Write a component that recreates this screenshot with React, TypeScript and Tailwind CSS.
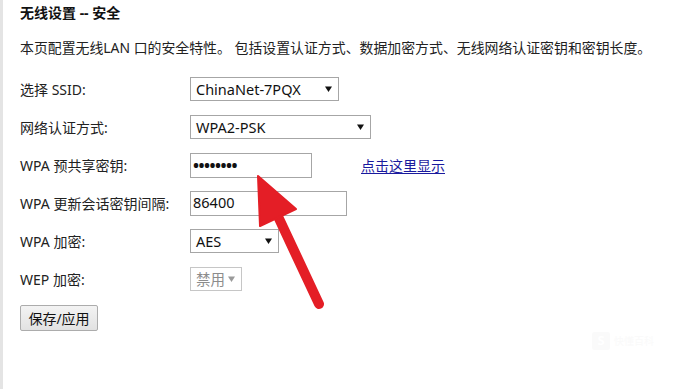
import React from 'react';

const font = "font-['Noto_Sans','Noto_Sans_CJK_SC',sans-serif]";

// Small dropdown arrow used by the fake selects
const Caret = ({ disabled }: { disabled?: boolean }) => (
  <svg width="7" height="6" viewBox="0 0 7 6" className="shrink-0">
    <path d="M0 0.5 L7 0.5 L3.5 6 Z" fill={disabled ? '#9a9a9a' : '#111'} />
  </svg>
);

const Select = ({ value, width, disabled }: { value: string; width: string; disabled?: boolean }) => (
  <div
    className={`${width} h-[24px] flex items-center justify-between pl-[5px] pr-[6px] border bg-white ${
      disabled ? 'border-[#c6c6c6] text-[#8c8c8c]' : 'border-[#a6a6a6] text-[#111]'
    }`}
  >
    <span className="text-[14.5px] leading-none">{value}</span>
    <Caret disabled={disabled} />
  </div>
);

const Row = ({ label, children }: { label: string; children: React.ReactNode }) => (
  <div className="h-[38px] flex items-center">
    <div className="w-[170px] text-[14px] text-[#222]">{label}</div>
    {children}
  </div>
);

const App = () => {
  return (
    <div className={`${font} relative w-[691px] h-[389px] bg-white overflow-hidden flex`}>
      <div className="w-[3px] h-full bg-[#e4e4e4] shrink-0"></div>
      <div className="pl-[17px] flex flex-col">
        <div className="h-[26px] leading-[26px] text-[14px] font-bold text-[#111]">无线设置 -- 安全</div>
        <div className="mt-[9px] h-[26px] leading-[26px] text-[13.9px] text-[#222] whitespace-nowrap">
          本页配置无线LAN 口的安全特性。 包括设置认证方式、数据加密方式、无线网络认证密钥和密钥长度。
        </div>

        <div className="mt-[9px] flex flex-col">
          <Row label="选择 SSID:">
            <Select value="ChinaNet-7PQX" width="w-[149px]" />
          </Row>
          <Row label="网络认证方式:">
            <Select value="WPA2-PSK" width="w-[181px]" />
          </Row>
          <Row label="WPA 预共享密钥:">
            <div className="w-[122px] h-[25px] border border-[#a6a6a6] flex items-center pl-[2px] text-[16px] font-bold tracking-[-0.5px] text-[#111]">
              ••••••••
            </div>
            <a href="#" className="ml-[49px] text-[14px] text-[#1a1a9e] underline underline-offset-2">点击这里显示</a>
          </Row>
          <Row label="WPA 更新会话密钥间隔:">
            <div className="w-[157px] h-[25px] border border-[#a6a6a6] flex items-center pl-[2px] text-[14.5px] text-[#111]">
              86400
            </div>
          </Row>
          <Row label="WPA 加密:">
            <Select value="AES" width="w-[89px]" />
          </Row>
          <Row label="WEP 加密:">
            <Select value="禁用" width="w-[52px]" disabled />
          </Row>
        </div>

        <div className="mt-[7px]">
          <button className="w-[78px] h-[26px] text-[14px] text-[#111] border border-[#acacac] rounded-[2px] bg-gradient-to-b from-[#f3f3f3] to-[#e2e2e2]">
            保存/应用
          </button>
        </div>
      </div>

      {/* faint watermark */}
      <div className="absolute left-[592px] top-[332px] flex items-center gap-[4px] opacity-40">
        <div className="w-[18px] h-[18px] rounded-[3px] bg-[#f3f3f3] text-white text-[13px] font-bold flex items-center justify-center">S</div>
        <div className="text-[10px] leading-[10px] text-[#f3f3f3]">
          <div>快懂百科</div>
        </div>
      </div>

      {/* red arrow overlay */}
      <svg className="absolute left-0 top-0 pointer-events-none" width="691" height="389" viewBox="0 0 691 389">
        <line x1="275" y1="210" x2="319" y2="304" stroke="#e41e26" strokeWidth="10" strokeLinecap="round" />
        <path d="M258 176 L296 209 L260 226 Z" fill="#e41e26" stroke="#e41e26" strokeWidth="2" strokeLinejoin="round" />
      </svg>
    </div>
  );
};

export default App;
